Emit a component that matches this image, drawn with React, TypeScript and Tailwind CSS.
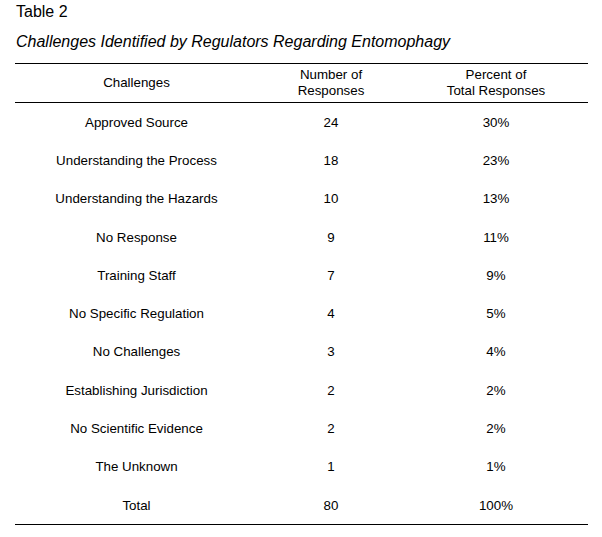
import React from "react";

const rows: [string, string, string][] = [
  ["Approved Source", "24", "30%"],
  ["Understanding the Process", "18", "23%"],
  ["Understanding the Hazards", "10", "13%"],
  ["No Response", "9", "11%"],
  ["Training Staff", "7", "9%"],
  ["No Specific Regulation", "4", "5%"],
  ["No Challenges", "3", "4%"],
  ["Establishing Jurisdiction", "2", "2%"],
  ["No Scientific Evidence", "2", "2%"],
  ["The Unknown", "1", "1%"],
  ["Total", "80", "100%"],
];

export default function App() {
  return (
    <div
      className="w-[602px] h-[537px] bg-white text-black px-[15px] pt-[3px]"
      style={{ fontFamily: '"Liberation Sans", Arial, sans-serif' }}
    >
      <div className="text-[16px] leading-[18px] ml-px">Table 2</div>
      <div className="text-[16px] leading-[18px] italic ml-px mt-[12px]">
        Challenges Identified by Regulators Regarding Entomophagy
      </div>
      <div className="mt-[12px] w-[573px] border-t border-b border-black text-[13.33px] leading-[15px]">
        <div className="grid grid-cols-[243px_146px_184px] h-[39px] border-b border-black items-center text-center leading-[16px]">
          <div>Challenges</div>
          <div>
            Number of
            <br />
            Responses
          </div>
          <div>
            Percent of
            <br />
            Total Responses
          </div>
        </div>
        {rows.map((r, i) => (
          <div
            key={i}
            className="grid grid-cols-[243px_146px_184px] h-[38.3px] items-center text-center"
          >
            <div>{r[0]}</div>
            <div>{r[1]}</div>
            <div>{r[2]}</div>
          </div>
        ))}
      </div>
    </div>
  );
}
